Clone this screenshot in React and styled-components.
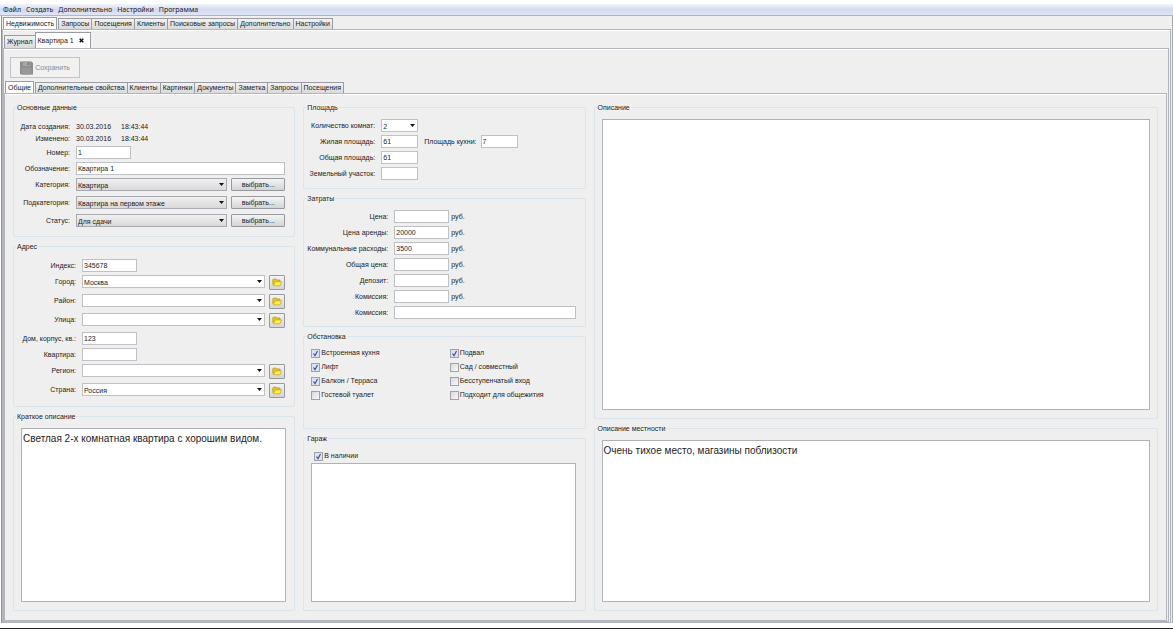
import { useState } from "react";
import styled, { createGlobalStyle } from "styled-components";

const GlobalStyle = createGlobalStyle`
  * {
    box-sizing: border-box;
  }
  body {
    margin: 0;
    background: white;
    color: #1c1c1c;
    font-family: "Liberation Sans", Arial, sans-serif;
    font-size: 7px;
    line-height: 14px;
  }
  button, input, select, textarea {
    font: inherit;
    color: inherit;
    margin: 0;
    border-radius: 0;
  }
`;

const Window = styled.div`
  min-height: 100vh;
  display: flex;
  flex-direction: column;
  padding-top: 4px;
  border-bottom: 1px solid #222;
`;

const MenuBar = styled.nav`
  display: flex;
  gap: 5px;
  height: 12px;
  padding-left: 3px;
  background: linear-gradient(#f4f6fc, #d3daee 50%, #dfe5f7);
  border-bottom: 1px solid #b4b6bd;
`;

const MenuItem = styled.button`
  border: none;
  padding: 0;
  background: none;
  font-family: "Noto Sans", sans-serif;
  font-size: 7px;
  line-height: 11px;
`;

const Frame = styled.div`
  flex: 1;
  display: flex;
  flex-direction: column;
  margin: 0 0 5px 1px;
  padding-top: 1px;
  border-left: 1px solid #8d939c;
  border-right: 1px solid #a5a8b0;
  background: #efefef;
`;

const TabList = styled.div`
  display: flex;
  align-items: flex-end;
  height: ${(props) => props.$height};
  padding-left: 1px;
`;

const Tab = styled.button`
  height: ${(props) => (props.$active ? "100%" : "11px")};
  padding: 0 2px;
  border: 1px solid #9a9ca3;
  border-bottom: none;
  margin-right: ${(props) => (props.$active ? "1px" : "-1px")};
  background: ${(props) => (props.$active ? "white" : "linear-gradient(#f2f2f2, #dadada)")};
  line-height: 10px;
  white-space: nowrap;
`;

const ClosableTab = styled(Tab)`
  display: flex;
  align-items: center;
  gap: 5px;
  padding-right: 6px;
`;

const SideTab = styled(Tab)`
  height: 13px;
`;

const Pane = styled.div`
  flex: 1;
  display: flex;
  flex-direction: column;
  margin-right: 1px;
  padding-top: ${(props) => props.$top || "0"};
  border: 1px solid #b4b6bd;
  box-shadow: inset 0 1px white;
`;

const Toolbar = styled.div`
  padding: 8px 6px 3px;
`;

const SaveButton = styled.button`
  display: flex;
  align-items: center;
  gap: 2px;
  height: 21px;
  width: 70px;
  padding: 0 9px;
  border: 1px solid #c2c4c8;
  background: #f1f1f1;
  color: #8c8c8c;
`;

const Columns = styled.div`
  flex: 1;
  display: grid;
  grid-template-columns: minmax(0, 1fr) minmax(0, 1fr) minmax(0, 2fr);
  gap: 8px;
  padding: 8px 8px 9px;
`;

const Column = styled.div`
  display: flex;
  flex-direction: column;
  gap: 4px;
`;

const Group = styled.fieldset`
  display: flex;
  flex-direction: column;
  flex: ${(props) => props.$flex || "none"};
  min-width: 0;
  margin: 0;
  padding: 0;
  border: 1px solid #dbe4ea;
  border-radius: 2px;
`;

const Legend = styled.legend`
  margin-left: 2px;
  padding: 0 1px;
  line-height: 11px;
`;

const GroupBody = styled.div`
  flex: 1;
  display: flex;
  flex-direction: column;
  padding: ${(props) => props.$pad};
`;

const Row = styled.div`
  display: flex;
  align-items: flex-start;
  gap: 4px;
  height: ${(props) => props.$height || "16px"};
  padding-top: ${(props) => (props.$height === "12px" ? "0" : "2px")};
`;

const Label = styled.label`
  width: ${(props) => props.$width};
  margin-right: 2px;
  text-align: right;
  white-space: nowrap;
`;

const InlineLabel = styled.label`
  margin-left: 2px;
  white-space: nowrap;
`;

const Unit = styled.span`
  margin-left: -2px;
`;

const DateText = styled.span`
  width: 41px;
`;

const Input = styled.input`
  width: ${(props) => props.$width || "auto"};
  flex: ${(props) => (props.$width ? "none" : "1")};
  min-width: 0;
  height: 13px;
  padding: 0 1px;
  border: 1px solid #bfc1c6;
  background: white;
`;

const SelectBox = styled.span`
  position: relative;
  display: flex;
  flex: ${(props) => (props.$width ? "none" : "1")};
  width: ${(props) => props.$width || "auto"};
  height: 13px;

  svg {
    position: absolute;
    right: 3px;
    top: 5px;
    pointer-events: none;
  }
`;

const Select = styled.select`
  appearance: none;
  width: 100%;
  height: 13px;
  padding: 0 1px;
  border: 1px solid ${(props) => (props.$flat ? "#bfc1c6" : "#a8aaaf")};
  background: ${(props) => (props.$flat ? "white" : "linear-gradient(#f0f0f0, #d9d9d9)")};
`;

const ChooseButton = styled.button`
  width: 54px;
  height: 13px;
  padding: 0;
  border: 1px solid #97999e;
  border-radius: 1px;
  background: linear-gradient(#f4f4f4, #d4d4d4);
  line-height: 10px;
`;

const FolderButton = styled.button`
  display: flex;
  align-items: center;
  justify-content: center;
  width: 16px;
  height: 15px;
  padding: 0;
  border: 1px solid #97999e;
  border-radius: 1px;
  background: linear-gradient(#f4f4f4, #d4d4d4);
`;

const TextArea = styled.textarea`
  flex: 1;
  width: 100%;
  min-height: 60px;
  padding: 3px 1px;
  border: 1px solid #b0b2b9;
  outline: none;
  resize: none;
  background: white;
  font-family: "Liberation Sans", Arial, sans-serif;
  font-size: 10px;
  line-height: 14px;
`;

const CheckGrid = styled.div`
  display: grid;
  grid-template-columns: 11fr 10fr;
`;

const CheckLabel = styled.label`
  display: flex;
  align-items: center;
  gap: 1px;
  height: 14px;
  padding-left: ${(props) => props.$indent || "0"};
  white-space: nowrap;
`;

const CheckBox = styled.span`
  display: grid;
  width: 9px;
  height: 9px;

  > * {
    grid-area: 1 / 1;
  }
  svg {
    pointer-events: none;
  }
`;

const Check = styled.input`
  appearance: none;
  width: 9px;
  height: 9px;
  border: 1px solid #a0a2a8;
  background: linear-gradient(135deg, #d6d8dc, #fafafa);

  &:checked {
    background: #dce1ee;
  }
`;

const FloppyIcon = () => (
  <svg width="14" height="14" viewBox="0 0 14 14" aria-hidden="true">
    <path d="M0 0h12l2 2v12H1l-1-1z" fill="#8d8d8d" />
    <path d="M3 0h8v5H3z" fill="#a6a6a6" />
    <path d="M8 1h2v3H8z" fill="#7c7c7c" />
    <path d="M2 7h10v7H2z" fill="#999" />
  </svg>
);

const FolderIcon = () => (
  <svg width="10" height="9" viewBox="0 0 10 9" aria-hidden="true">
    <path d="M.8 6.8V2L1.6 1h2.2l1.2 1h3v2" fill="#e8c818" stroke="#a8880c" strokeWidth=".6" />
    <path d="M1.4 7.8 3.2 3.8h6.4L8 7.8z" fill="#fff04a" stroke="#b49a13" strokeWidth=".6" />
  </svg>
);

const Arrow = () => (
  <svg width="5" height="3" viewBox="0 0 5 3" aria-hidden="true">
    <path d="M0 0h5L2.5 3z" fill="#111" />
  </svg>
);

const CloseIcon = () => (
  <svg width="5" height="5" viewBox="0 0 5 5" aria-hidden="true">
    <path d="M.7.7l3.6 3.6M4.3.7.7 4.3" stroke="#111" strokeWidth="1.5" />
  </svg>
);

const Combo = ({ id, value, width, flat }) => (
  <SelectBox $width={width}>
    <Select id={id} defaultValue={value} $flat={flat}>
      <option>{value}</option>
    </Select>
    <Arrow />
  </SelectBox>
);

const Checkbox = ({ text, checked, indent }) => {
  const [on, setOn] = useState(Boolean(checked));
  return (
    <CheckLabel $indent={indent}>
      <CheckBox>
        <Check type="checkbox" checked={on} onChange={(e) => setOn(e.target.checked)} />
        {on && (
          <svg width="9" height="9" viewBox="0 0 9 9" aria-hidden="true">
            <path d="M2.5 4.5 4 6.7 6.5 2" fill="none" stroke="#3c4fa0" strokeWidth="1.2" />
          </svg>
        )}
      </CheckBox>
      {text}
    </CheckLabel>
  );
};

const Section = ({ title, pad, flex, children }) => (
  <Group $flex={flex}>
    <Legend>{title}</Legend>
    <GroupBody $pad={pad}>{children}</GroupBody>
  </Group>
);

const menu = ["Файл", "Создать", "Дополнительно", "Настройки", "Программа"];
const mainTabs = ["Недвижимость", "Запросы", "Посещения", "Клиенты", "Поисковые запросы", "Дополнительно", "Настройки"];
const detailTabs = ["Общие", "Дополнительные свойства", "Клиенты", "Картинки", "Документы", "Заметка", "Запросы", "Посещения"];

const categories = [
  { id: "category", label: "Категория:", value: "Квартира" },
  { id: "subcategory", label: "Подкатегория:", value: "Квартира на первом этаже" },
  { id: "status", label: "Статус:", value: "Для сдачи" },
];

const address = [
  { id: "zip", label: "Индекс:", value: "345678" },
  { id: "city", label: "Город:", value: "Москва", combo: true },
  { id: "district", label: "Район:", value: "", combo: true },
  { id: "street", label: "Улица:", value: "", combo: true },
  { id: "house", label: "Дом, корпус, кв.:", value: "123" },
  { id: "flat", label: "Квартира:", value: "" },
  { id: "region", label: "Регион:", value: "", combo: true },
  { id: "country", label: "Страна:", value: "Россия", combo: true },
];

const costs = [
  { id: "price", label: "Цена:", value: "" },
  { id: "rent", label: "Цена аренды:", value: "20000" },
  { id: "utilities", label: "Коммунальные расходы:", value: "3500" },
  { id: "total", label: "Общая цена:", value: "" },
  { id: "deposit", label: "Депозит:", value: "" },
  { id: "commission", label: "Комиссия:", value: "" },
];

const features = [
  ["Встроенная кухня", true],
  ["Подвал", true],
  ["Лифт", true],
  ["Сад / совместный", false],
  ["Балкон / Терраса", true],
  ["Бесступенчатый вход", false],
  ["Гостевой туалет", false],
  ["Подходит для общежития", false],
];

const Tabs = ({ items, height }) => {
  const [active, setActive] = useState(0);
  return (
    <TabList role="tablist" $height={height}>
      {items.map((item, i) => (
        <Tab key={item} role="tab" aria-selected={i === active} $active={i === active} onClick={() => setActive(i)}>
          {item}
        </Tab>
      ))}
    </TabList>
  );
};

const App = () => {
  return (
    <Window>
      <GlobalStyle />
      <MenuBar>
        {menu.map((item) => (
          <MenuItem key={item}>{item}</MenuItem>
        ))}
      </MenuBar>
      <Frame>
        <Tabs items={mainTabs} height="12px" />
        <Pane $top="2px">
          <TabList role="tablist" $height="16px">
            <SideTab role="tab" aria-selected={false}>Журнал</SideTab>
            <ClosableTab role="tab" aria-selected={true} $active>
              Квартира 1 <CloseIcon />
            </ClosableTab>
          </TabList>
          <Pane>
            <Toolbar>
              <SaveButton disabled>
                <FloppyIcon /> Сохранить
              </SaveButton>
            </Toolbar>
            <Tabs items={detailTabs} height="12px" />
            <Pane>
              <Columns>
                <Column>
                  <Section title="Основные данные" pad="7px 9px 6px 0">
                    <Row $height="12px">
                      <Label as="span" $width="56px">Дата создания:</Label>
                      <DateText>30.03.2016</DateText>
                      <span>18:43:44</span>
                    </Row>
                    <Row $height="12px">
                      <Label as="span" $width="56px">Изменено:</Label>
                      <DateText>30.03.2016</DateText>
                      <span>18:43:44</span>
                    </Row>
                    <Row>
                      <Label $width="56px" htmlFor="number">Номер:</Label>
                      <Input id="number" $width="55px" defaultValue="1" />
                    </Row>
                    <Row>
                      <Label $width="56px" htmlFor="title">Обозначение:</Label>
                      <Input id="title" defaultValue="Квартира 1" />
                    </Row>
                    {categories.map((item) => (
                      <Row key={item.id} $height="18px">
                        <Label $width="56px" htmlFor={item.id}>{item.label}</Label>
                        <Combo id={item.id} value={item.value} />
                        <ChooseButton>выбрать...</ChooseButton>
                      </Row>
                    ))}
                  </Section>
                  <Section title="Адрес" pad="5px 9px 6px 0">
                    {address.map((item) => (
                      <Row key={item.id} $height={item.combo ? "19px" : "16px"}>
                        <Label $width="62px" htmlFor={item.id}>{item.label}</Label>
                        {item.combo ? (
                          <>
                            <Combo id={item.id} value={item.value} flat />
                            <FolderButton aria-label={item.label}>
                              <FolderIcon />
                            </FolderButton>
                          </>
                        ) : (
                          <Input id={item.id} $width="55px" defaultValue={item.value} />
                        )}
                      </Row>
                    ))}
                  </Section>
                  <Section title="Краткое описание" flex="1" pad="6px 8px 8px 7px">
                    <TextArea aria-label="Краткое описание" defaultValue="Светлая 2-х комнатная квартира с хорошим видом." />
                  </Section>
                </Column>

                <Column>
                  <Section title="Площадь" pad="4px 9px 7px 0">
                    <Row>
                      <Label $width="71px" htmlFor="rooms">Количество комнат:</Label>
                      <Combo id="rooms" value="2" width="37px" flat />
                    </Row>
                    <Row>
                      <Label $width="71px" htmlFor="living">Жилая площадь:</Label>
                      <Input id="living" $width="37px" defaultValue="61" />
                      <InlineLabel htmlFor="kitchen">Площадь кухни:</InlineLabel>
                      <Input id="kitchen" $width="37px" defaultValue="7" />
                    </Row>
                    <Row>
                      <Label $width="71px" htmlFor="area">Общая площадь:</Label>
                      <Input id="area" $width="37px" defaultValue="61" />
                    </Row>
                    <Row>
                      <Label $width="71px" htmlFor="land">Земельный участок:</Label>
                      <Input id="land" $width="37px" />
                    </Row>
                  </Section>
                  <Section title="Затраты" pad="4px 9px 6px 0">
                    {costs.map((item) => (
                      <Row key={item.id}>
                        <Label $width="84px" htmlFor={item.id}>{item.label}</Label>
                        <Input id={item.id} $width="55px" defaultValue={item.value} />
                        <Unit>руб.</Unit>
                      </Row>
                    ))}
                    <Row>
                      <Label $width="84px" htmlFor="commissionNote">Комиссия:</Label>
                      <Input id="commissionNote" />
                    </Row>
                  </Section>
                  <Section title="Обстановка" pad="4px 9px 26px 7px">
                    <CheckGrid>
                      {features.map(([text, checked]) => (
                        <Checkbox key={text} text={text} checked={checked} />
                      ))}
                    </CheckGrid>
                  </Section>
                  <Section title="Гараж" flex="1" pad="5px 9px 8px 7px">
                    <Checkbox text="В наличии" checked indent="3px" />
                    <TextArea aria-label="Гараж" />
                  </Section>
                </Column>

                <Column>
                  <Section title="Описание" flex="17 1 0" pad="6px 7px 8px">
                    <TextArea aria-label="Описание" />
                  </Section>
                  <Section title="Описание местности" flex="10 1 0" pad="6px 7px 8px">
                    <TextArea aria-label="Описание местности" defaultValue="Очень тихое место, магазины поблизости" />
                  </Section>
                </Column>
              </Columns>
            </Pane>
          </Pane>
        </Pane>
      </Frame>
    </Window>
  );
};

export default App;
